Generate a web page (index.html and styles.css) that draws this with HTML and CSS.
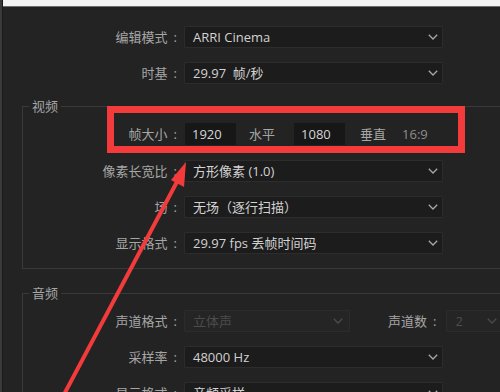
FILE: index.html
```html
<!DOCTYPE html>
<html lang="zh-CN">
<head>
<meta charset="utf-8">
<title>序列设置</title>
<link rel="stylesheet" href="styles.css">
</head>
<body>
<div class="edge"></div>
<div class="main">
  <div class="topbar"></div>
  <div class="panel">
    <div class="row outer">
      <span class="lbl">编辑模式<i>:</i></span>
      <div class="sel"><span>ARRI Cinema</span><svg class="chev" viewBox="0 0 10 6"><polyline points="0.8,0.8 5,5 9.2,0.8"/></svg></div>
    </div>
    <div class="row outer">
      <span class="lbl">时基<i>:</i></span>
      <div class="sel"><span>29.97&ensp;帧/秒</span><svg class="chev" viewBox="0 0 10 6"><polyline points="0.8,0.8 5,5 9.2,0.8"/></svg></div>
    </div>

    <fieldset class="group video">
      <legend>视频</legend>
      <div class="row first">
        <span class="lbl">帧大小<i>:</i></span>
        <div class="dims">
          <span class="num">1920</span>
          <span class="unit u1">水平</span>
          <span class="num">1080</span>
          <span class="unit u2">垂直</span>
          <span class="ratio">16:9</span>
        </div>
      </div>
      <div class="row">
        <span class="lbl">像素长宽比<i>:</i></span>
        <div class="sel"><span>方形像素 (1.0)</span><svg class="chev" viewBox="0 0 10 6"><polyline points="0.8,0.8 5,5 9.2,0.8"/></svg></div>
      </div>
      <div class="row">
        <span class="lbl">场<i>:</i></span>
        <div class="sel"><span>无场（逐行扫描）</span><svg class="chev" viewBox="0 0 10 6"><polyline points="0.8,0.8 5,5 9.2,0.8"/></svg></div>
      </div>
      <div class="row">
        <span class="lbl">显示格式<i>:</i></span>
        <div class="sel"><span>29.97 fps 丢帧时间码</span><svg class="chev" viewBox="0 0 10 6"><polyline points="0.8,0.8 5,5 9.2,0.8"/></svg></div>
      </div>
    </fieldset>

    <fieldset class="group audio">
      <legend>音频</legend>
      <div class="row">
        <span class="lbl">声道格式<i>:</i></span>
        <div class="pair">
          <div class="sel off wide"><span>立体声</span><svg class="chev" viewBox="0 0 10 6"><polyline points="0.8,0.8 5,5 9.2,0.8"/></svg></div>
          <span class="lbl2">声道数<i>:</i></span>
          <div class="sel off small"><span>2</span><svg class="chev" viewBox="0 0 10 6"><polyline points="0.8,0.8 5,5 9.2,0.8"/></svg></div>
        </div>
      </div>
      <div class="row">
        <span class="lbl">采样率<i>:</i></span>
        <div class="sel"><span>48000 Hz</span><svg class="chev" viewBox="0 0 10 6"><polyline points="0.8,0.8 5,5 9.2,0.8"/></svg></div>
      </div>
      <div class="row">
        <span class="lbl">显示格式<i>:</i></span>
        <div class="sel"><span>音频采样</span><svg class="chev" viewBox="0 0 10 6"><polyline points="0.8,0.8 5,5 9.2,0.8"/></svg></div>
      </div>
    </fieldset>
  </div>
</div>

<div class="highlight"></div>
<svg class="arrow" viewBox="0 0 500 392">
  <line x1="60" y1="402" x2="179" y2="178"/>
  <polygon points="186,162 171,180 184,187"/>
</svg>
</body>
</html>
```

FILE: styles.css
```css
html, body {
  margin: 0;
  padding: 0;
}

body {
  width: 500px;
  height: 392px;
  overflow: hidden;
  position: relative;
  display: flex;
  background: #232323;
  font-family: "Open Sans", "Noto Sans CJK SC", sans-serif;
  font-size: 13px;
  color: #a6a6a6;
}

.edge {
  flex: none;
  width: 2px;
  background: #3a3a3a;
  border-right: 1px solid #1a1a1a;
}

.main {
  flex: none;
  width: 520px;
  display: flex;
  flex-direction: column;
}

.topbar {
  flex: none;
  height: 6px;
  background: #f4f4f4;
  border-bottom: 1px solid #6c6c6c;
}

.panel {
  display: flex;
  flex-direction: column;
  gap: 14px;
  padding: 19px 0 0 19px;
}

.row {
  display: grid;
  grid-template-columns: 154px auto;
  column-gap: 7px;
  align-items: center;
  height: 22px;
  line-height: 16px;
}

.row.outer {
  margin-left: 1px;
}

.lbl {
  text-align: right;
  white-space: nowrap;
  color: #a6a6a6;
}

.lbl i, .lbl2 i {
  font-style: normal;
  margin-left: 6px;
}

.sel {
  box-sizing: border-box;
  width: 259px;
  height: 22px;
  display: flex;
  align-items: center;
  justify-content: space-between;
  padding: 0 4px 0 8px;
  background: #1c1c1c;
  border: 1px solid #2c2c2c;
  border-radius: 1px;
  color: #d2d2d2;
  white-space: nowrap;
}

.chev {
  width: 10px;
  height: 6px;
  fill: none;
  stroke: #a8a8a8;
  stroke-width: 1.3;
}

.sel.off {
  background: #252525;
  border-color: #2c2c2c;
  color: #4c4c4c;
}

.sel.off .chev {
  stroke: #4c4c4c;
}

.sel.wide {
  width: 166px;
  padding-right: 6px;
}

.sel.small {
  width: 56px;
  margin-left: 10px;
}

.pair {
  display: flex;
  align-items: center;
}

.lbl2 {
  margin-left: 38px;
  white-space: nowrap;
  color: #a6a6a6;
}

.dims {
  display: flex;
  align-items: center;
  margin-left: 1px;
}

.num {
  box-sizing: border-box;
  width: 51px;
  height: 22px;
  line-height: 22px;
  padding-left: 7px;
  background: #171717;
  color: #d6d6d6;
}

.unit {
  color: #a6a6a6;
}

.u1 {
  margin: 0 19px 0 13px;
}

.u2 {
  margin: 0 16px 0 15px;
}

.ratio {
  color: #8e8e8e;
}

.group {
  margin: 0;
  padding: 9px 0 14px 0;
  border: 1px solid #393939;
  min-width: 0;
}

.group legend {
  margin-left: 6px;
  padding: 0 3px;
  font-size: 13px;
  line-height: 16px;
  color: #a6a6a6;
}

.group .row + .row {
  margin-top: 14px;
}

.group .row.first + .row {
  margin-top: 15px;
}

.audio {
  margin-top: 2px;
}

.highlight {
  position: absolute;
  left: 107px;
  top: 106px;
  width: 358px;
  height: 47px;
  box-sizing: border-box;
  border: 7px solid #f43b3b;
  pointer-events: none;
}

.arrow {
  position: absolute;
  left: 0;
  top: 0;
  width: 500px;
  height: 392px;
  pointer-events: none;
}

.arrow line {
  stroke: #f43b3b;
  stroke-width: 4;
}

.arrow polygon {
  fill: #f43b3b;
}
```
